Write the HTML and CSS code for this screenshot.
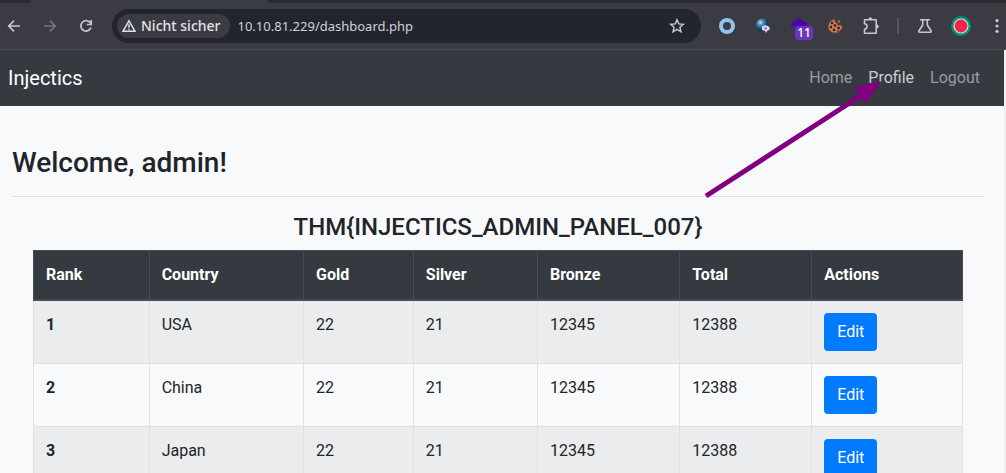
FILE: index.html
```html
<!DOCTYPE html>
<html lang="en">
<head>
<meta charset="utf-8">
<title>Injectics</title>
<link rel="stylesheet" href="styles.css">
</head>
<body>
<header class="browser">
  <div class="tabs"><span class="tab-left"></span><span class="tab-rest"></span></div>
  <div class="toolbar">
    <div class="nav-buttons">
      <button class="tool" aria-label="Back"><svg width="16" height="16" viewBox="0 0 16 16" fill="none" stroke="#c4c7cf" stroke-width="1.7"><path d="M14 8H3M8 2.600 2.700 8 8 13.400"/></svg></button>
      <button class="tool" aria-label="Forward"><svg width="16" height="16" viewBox="0 0 16 16" fill="none" stroke="#74767d" stroke-width="1.7"><path d="M2 8h11M8 2.600 13.300 8 8 13.400"/></svg></button>
      <button class="tool" aria-label="Reload"><svg width="16" height="16" viewBox="0 0 16 16" fill="none" stroke="#c4c7cf" stroke-width="1.7"><path d="M13 9.500A5.200 5.200 0 1 1 11.800 4.200L13.200 5.800M13.200 2v4.500H8.800"/></svg></button>
    </div>
    <div class="address">
      <button class="security">
        <svg width="14" height="14" viewBox="0 0 14 14" fill="none" stroke="#dfe0e4" stroke-width="1.5"><path d="M7 1.800 13 12.300H1Z"/><path d="M7 5.200v3.600M7 9.700v1.500"/></svg>
        Nicht sicher
      </button>
      <input class="url" type="text" aria-label="Address" value="10.10.81.229/dashboard.php">
      <button class="tool" aria-label="Bookmark"><svg width="16" height="16" viewBox="0 0 16 16" fill="none" stroke="#c9cbd2" stroke-width="1.4"><path d="m8 1.700 1.800 4.200 4.600.4-3.500 3 1.100 4.500L8 11.400l-4 2.400 1.100-4.500-3.500-3 4.600-.4Z"/></svg></button>
    </div>
    <div class="extensions">
      <button class="tool" aria-label="Ring extension"><svg width="16" height="16" viewBox="0 0 16 16"><circle cx="8" cy="8" r="6" fill="none" stroke="#91c5ed" stroke-width="4"/></svg></button>
      <button class="tool" aria-label="Globe extension"><svg width="16" height="16" viewBox="0 0 16 16"><defs><radialGradient id="globe" cx=".35" cy=".3"><stop offset="0" stop-color="#c4e6f5"/><stop offset=".4" stop-color="#4b90bb"/><stop offset="1" stop-color="#143b61"/></radialGradient></defs><circle cx="7.500" cy="7.300" r="6.800" fill="url(#globe)"/><path d="M7 9q2-3 6-1 3 2 1 4l-2 1-1 2-1-2-3-1Z" fill="#e4d5e9"/><circle cx="10.500" cy="10.500" r="1.200" fill="#9970ad"/></svg></button>
      <button class="tool badge-holder" aria-label="House extension"><svg width="16" height="16" viewBox="0 0 16 16"><path d="m8 0 8 5v3H13v4H3V8H0V5Z" fill="#4807a3"/></svg><span class="badge">11</span></button>
      <button class="tool" aria-label="Cookie extension"><svg width="16" height="16" viewBox="0 0 16 16"><path d="M8 1Q7 4 10 5q0 3 4 2l1 0q1 3-1 5-3 4-8 3-5-2-5-7 1-6 7-7Z" fill="#c47c50" stroke="#633a2a" stroke-width=".7"/><g fill="#241b1d"><circle cx="5" cy="5" r="1.200"/><circle cx="8" cy="7.500" r="1.200"/><circle cx="4" cy="9" r="1.200"/><circle cx="7" cy="12" r="1.200"/><circle cx="11.500" cy="10" r="1.300"/><circle cx="11" cy="13" r=".8"/></g><circle cx="12" cy="3.500" r="1.400" fill="#a8683f"/></svg></button>
      <button class="tool" aria-label="Extensions"><svg width="18" height="18" viewBox="0 0 18 18" fill="none" stroke="#c4c7cf" stroke-width="1.600"><path d="M2.500 2.800h11.700v13.400H2.500v-4q2.500-.3 2.500-2.700T2.500 6.800Z" stroke-linejoin="round"/><path d="M7 2.500q1.200-3 2.800 0M14.500 8q3.200 1.500 0 3" fill="#c4c7cf"/></svg></button>
      <span class="separator"></span>
      <button class="tool" aria-label="Labs"><svg width="16" height="16" viewBox="0 0 16 16" fill="none" stroke="#c4c7cf" stroke-width="1.600"><path d="M3 1.800h10M5.700 2v5L1.800 13q-.3 1.200.7 1.200h11q1 0 .7-1.200L10.300 7V2" stroke-linejoin="round"/></svg></button>
      <button class="tool" aria-label="Profile menu"><svg width="20" height="20" viewBox="0 0 20 20"><circle cx="10" cy="10" r="10" fill="#009379"/><circle cx="10" cy="10" r="7" fill="#f52453" stroke="#d9e0bd" stroke-width="1.200"/><circle cx="10" cy="10" r="4.500" fill="none" stroke="#ca234d" stroke-dasharray="1 2.500"/></svg></button>
      <button class="tool" aria-label="Menu"><svg width="16" height="16" viewBox="0 0 16 16" fill="#c4c7cf"><circle cx="8" cy="2.700" r="1.600"/><circle cx="8" cy="8" r="1.600"/><circle cx="8" cy="13.300" r="1.600"/></svg></button>
    </div>
  </div>
</header>
<div class="page">
  <nav class="navbar">
    <a class="brand" href="#">Injectics</a>
    <div class="links">
      <a href="#">Home</a>
      <a class="current" href="#">Profile<svg class="arrow" width="180" height="122" viewBox="0 0 180 122"><path d="M2 119 158 18" stroke="#800080" stroke-width="5"/><path d="m178 4-28 6 11 17Z" fill="#800080"/></svg></a>
      <a href="#">Logout</a>
    </div>
  </nav>
  <main class="content">
    <h1 class="welcome">Welcome, admin!</h1>
    <hr class="rule">
    <section class="standings">
      <h2 class="flag">THM{INJECTICS_ADMIN_PANEL_007}</h2>
      <table class="table">
        <thead><tr><th>Rank</th><th>Country</th><th>Gold</th><th>Silver</th><th>Bronze</th><th>Total</th><th>Actions</th></tr></thead>
        <tbody>
          <tr><th>1</th><td>USA</td><td>22</td><td>21</td><td>12345</td><td>12388</td><td><button class="edit">Edit</button></td></tr>
          <tr><th>2</th><td>China</td><td>22</td><td>21</td><td>12345</td><td>12388</td><td><button class="edit">Edit</button></td></tr>
          <tr><th>3</th><td>Japan</td><td>22</td><td>21</td><td>12345</td><td>12388</td><td><button class="edit">Edit</button></td></tr>
        </tbody>
      </table>
    </section>
  </main>
</div>
</body>
</html>
```
FILE: styles.css
```css
* { box-sizing: border-box; }
body {
  margin: 0;
  height: 100vh;
  overflow: hidden;
  display: flex;
  flex-direction: column;
  background: #f8f9fa;
  color: #212529;
  font: 16px/24px Roboto, sans-serif;
}
button { font: inherit; border: 0; margin: 0; }
svg { display: block; flex: none; }

/* Browser chrome */
.browser { flex: none; background: #3a3b43; border-bottom: 1px solid #4b4b4d; font-family: "Noto Sans", sans-serif; }
.tabs { display: flex; gap: 236px; height: 3px; }
.tab-left { width: 31px; background: #292c2f; border-radius: 0 0 8px 0; }
.tab-rest { flex: 1; background: #292c2f; border-radius: 0 0 0 8px; }
.toolbar { display: flex; align-items: center; height: 46px; padding-left: 6px; }
.tool { display: flex; align-items: center; justify-content: center; padding: 0; background: none; }
.nav-buttons { display: flex; gap: 20px; margin-right: 18px; }
.address {
  display: flex;
  align-items: center;
  flex: 1;
  height: 34px;
  padding: 0 16px 0 5px;
  border-radius: 17px;
  background: #23252e;
}
.security {
  display: flex;
  align-items: center;
  gap: 5px;
  height: 24px;
  padding: 0 9px 0 5px;
  border-radius: 12px;
  background: #3a3b43;
  color: #e3e3e6;
  font-size: 14px;
  font-weight: 500;
  white-space: nowrap;
}
.url {
  flex: 1;
  min-width: 0;
  margin-left: 8px;
  padding: 0;
  border: 0;
  outline: 0;
  background: none;
  color: #d0d2d6;
  font: 13px/20px "Noto Sans", sans-serif;
}
.extensions { display: flex; align-items: center; gap: 18px; margin-left: 17px; }
.extensions .tool { width: 18px; }
.badge-holder { position: relative; }
.badge {
  position: absolute;
  left: 5px;
  top: 8px;
  width: 18px;
  border-radius: 3px;
  background: #6b36bd;
  color: #fff;
  font-size: 12px;
  line-height: 14px;
  font-weight: 500;
}
.separator { width: 2px; height: 16px; margin: 0 -1px; background: #55565e; }

/* Page */
.page { flex: 1; min-height: 0; overflow: hidden; border-right: 2px solid #f0f0f1; }
.navbar {
  display: flex;
  align-items: center;
  justify-content: space-between;
  height: 56px;
  padding: 0 16px 0 8px;
  background: #343a40;
}
.navbar a { text-decoration: none; }
.brand { color: #fff; font-size: 20px; line-height: 30px; }
.links { display: flex; }
.links a { padding: 8px; color: #999c9f; }
.links .current { position: relative; color: #cccecf; }
.arrow { position: absolute; right: 38px; top: 19px; z-index: 1; pointer-events: none; }
.content { padding: 40px 20px 0 12px; }
.welcome { margin: 0; font-size: 28px; line-height: 34px; font-weight: 500; }
.rule { margin: 16px 0; border: 0; border-top: 1px solid #dfe0e1; }
.standings { padding: 0 21px; }
.flag { margin: 0 0 8px; font-size: 24px; line-height: 29px; font-weight: 500; text-align: center; }
.table { width: 100%; border-collapse: collapse; border: 1px solid #dee2e6; }
.table th, .table td { padding: 12px; border: 1px solid #dee2e6; text-align: left; vertical-align: top; }
.table thead th { background: #343a40; color: #fff; border-color: #454d55; border-bottom-width: 2px; }
.table tbody tr:nth-child(odd) { background: #ebeced; }
.edit {
  display: block;
  padding: 7px 13px;
  border-radius: 4px;
  background: #007bff;
  color: #fff;
}
```
